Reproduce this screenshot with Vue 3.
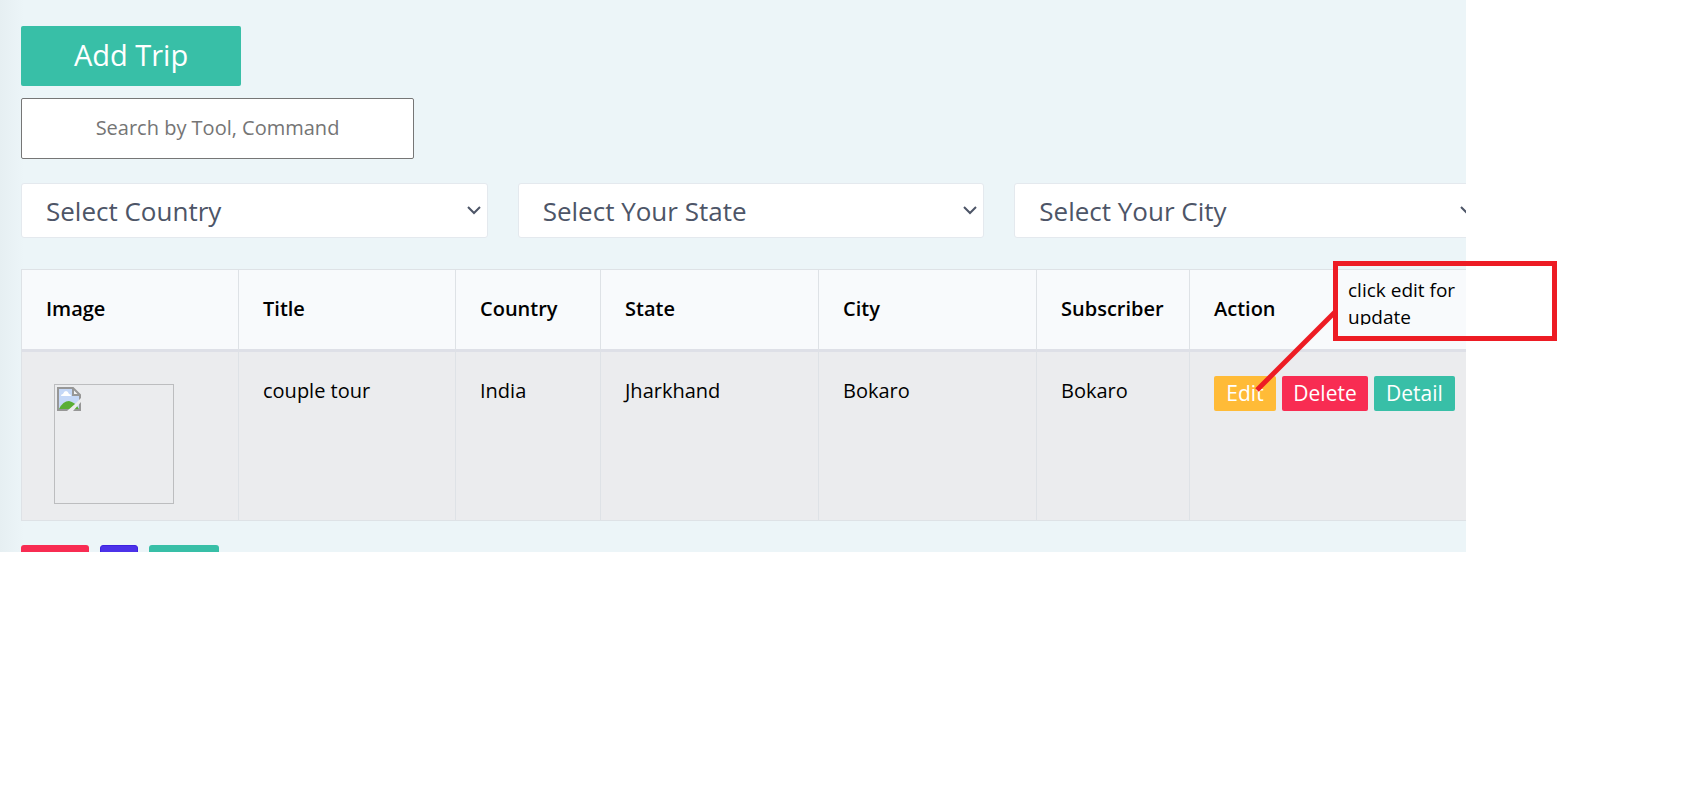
<script setup>
import { ref } from 'vue'

const search = ref('')
const filters = [
  { id: 'country', label: 'Select Country' },
  { id: 'state', label: 'Select Your State' },
  { id: 'city', label: 'Select Your City' },
]
const columns = ['Image', 'Title', 'Country', 'State', 'City', 'Subscriber', 'Action']
const trips = [
  { title: 'couple tour', country: 'India', state: 'Jharkhand', city: 'Bokaro', subscriber: 'Bokaro' },
]
</script>

<template>
  <div class="page">
    <main class="panel">
      <button class="add" type="button">Add Trip</button>
      <input v-model="search" class="search" type="text" placeholder="Search by Tool, Command" aria-label="Search by Tool, Command" />

      <div class="filters">
        <div v-for="f in filters" :key="f.id" class="filter">
          <select :id="f.id" :aria-label="f.label">
            <option>{{ f.label }}</option>
          </select>
          <svg class="chevron" viewBox="0 0 14 9" aria-hidden="true">
            <path d="M1 1l6 6 6-6" fill="none" stroke="#4d5567" stroke-width="2" />
          </svg>
        </div>
      </div>

      <table class="trips">
        <colgroup>
          <col v-for="c in columns" :key="c" :class="'col-' + c.toLowerCase()" />
        </colgroup>
        <thead>
          <tr>
            <th v-for="c in columns" :key="c" scope="col">{{ c }}</th>
          </tr>
        </thead>
        <tbody>
          <tr v-for="t in trips" :key="t.title">
            <td class="thumb-cell">
              <div class="thumb">
                <svg viewBox="0 0 24 24" aria-hidden="true">
                  <path d="M1 1h15l7 7v15H1z" fill="#c5d8f7" />
                  <path d="M4 9q0-2 2-2q1-3 3-3t3 3q2 0 2 2z" fill="#fff" />
                  <path d="M2 22q4-8 10-8q6 1 10 8z" fill="#5aae35" />
                  <path d="M16 1v7h7z" fill="#f4f4f4" />
                  <path d="M16 1v7h7M1 1h15l7 7v15H1z" fill="none" stroke="#979797" stroke-width="2" />
                  <path d="M10 24l8-7l6-6v4l-8 9z" fill="#ebecee" />
                </svg>
              </div>
            </td>
            <td>{{ t.title }}</td>
            <td>{{ t.country }}</td>
            <td>{{ t.state }}</td>
            <td>{{ t.city }}</td>
            <td>{{ t.subscriber }}</td>
            <td>
              <div class="actions">
                <button class="edit" type="button">Edit</button>
                <button class="delete" type="button">Delete</button>
                <button class="detail" type="button">Detail</button>
              </div>
            </td>
          </tr>
        </tbody>
      </table>

      <div class="tabs">
        <button class="tab red" type="button" aria-label="Previous"></button>
        <button class="tab blue" type="button" aria-label="Page"></button>
        <button class="tab green" type="button" aria-label="Next"></button>
      </div>
    </main>

    <aside class="note">
      <p>click edit for update</p>
      <svg class="pointer" viewBox="0 0 84 84" aria-hidden="true">
        <path d="M82 3L3 82" stroke="#ed1c24" stroke-width="5" />
      </svg>
    </aside>
  </div>
</template>

<style>
body {
  background: #fff;
}
</style>

<style scoped>
.page {
  position: relative;
  overflow: hidden;
  font-family: "Open Sans", "Noto Sans", sans-serif;
  font-size: 20px;
  line-height: 30px;
  color: #000;
}
.page * {
  box-sizing: border-box;
}
button,
input,
select {
  font-family: inherit;
  margin: 0;
}
.panel {
  margin-right: 222px;
  padding: 26px 0 0 21px;
  overflow: hidden;
  background: linear-gradient(to right, #e6eff2, #ecf5f8 24px);
}
.add {
  display: block;
  width: 220px;
  height: 60px;
  padding: 0 0 4px;
  border: 0;
  border-radius: 2px;
  background: #38bfa7;
  color: #fff;
  font-size: 29px;
}
.search {
  display: block;
  width: 393px;
  height: 61px;
  margin-top: 12px;
  padding: 0 24px 2px;
  border: 1px solid #767676;
  border-radius: 2px;
  background: #fff;
  font-size: 20px;
  text-align: center;
}
.search::placeholder {
  color: #757575;
  opacity: 1;
}
.filters {
  display: grid;
  grid-template-columns: repeat(3, 1fr);
  gap: 30px;
  margin: 24px -15px 0 0;
}
.filter {
  position: relative;
}
.filter select {
  display: block;
  width: 100%;
  height: 55px;
  padding: 0 24px;
  border: 1px solid #e4e9ee;
  border-radius: 3px;
  appearance: none;
  background: #fff;
  color: #4d5567;
  font-size: 26px;
}
.chevron {
  position: absolute;
  top: 23px;
  right: 7px;
  width: 14px;
  height: 9px;
}
.trips {
  width: calc(100% + 16px);
  margin-top: 31px;
  border-collapse: separate;
  border-spacing: 0;
  table-layout: fixed;
  border-top: 1px solid #dee2e6;
  border-left: 1px solid #dee2e6;
}
.col-image,
.col-title {
  width: 217px;
}
.col-state,
.col-city {
  width: 218px;
}
.col-country {
  width: 145px;
}
.col-subscriber {
  width: 153px;
}
th {
  height: 82px;
  padding: 0 24px 2px;
  border-right: 1px solid #dee2e6;
  border-bottom: 3px solid #dee0e7;
  background: #f8fafc;
  font-weight: 600;
  text-align: left;
}
td {
  padding: 24px 24px 8px;
  border-right: 1px solid #dee2e6;
  border-bottom: 1px solid #dee2e6;
  background: #ebecee;
  vertical-align: top;
}
.thumb {
  width: 120px;
  height: 120px;
  margin: 8px;
  padding: 2px;
  border: 1px solid #bcbdbf;
}
.thumb svg {
  display: block;
  width: 24px;
  height: 24px;
}
.actions {
  display: flex;
  gap: 6px;
}
.actions button {
  flex: none;
  height: 35px;
  padding: 0;
  border: 0;
  border-radius: 2px;
  color: #fff;
  font-size: 21px;
  line-height: 35px;
}
.actions .edit {
  width: 62px;
  background: #ffbb37;
}
.actions .delete {
  width: 86px;
  background: #f82c52;
}
.actions .detail {
  width: 81px;
  background: #38bfa7;
}
.tabs {
  display: flex;
  gap: 11px;
  height: 7px;
  margin-top: 24px;
  overflow: hidden;
}
.tab {
  height: 35px;
  padding: 0;
  border: 0;
  border-radius: 3px;
}
.red {
  width: 68px;
  background: #f82c52;
}
.blue {
  width: 38px;
  border: 1px solid #3d22e0;
  background: #4c32e9;
}
.green {
  width: 70px;
  background: #38bfa7;
}
.note {
  position: absolute;
  top: 261px;
  right: 131px;
  width: 224px;
  height: 80px;
  padding: 11px 10px;
  border: 5px solid #ed1c24;
}
.note p {
  width: 130px;
  height: 48px;
  margin: 0;
  overflow: hidden;
  font-size: 19px;
  line-height: 27px;
}
.pointer {
  position: absolute;
  top: 42px;
  left: -84px;
  width: 84px;
  height: 84px;
}
</style>
